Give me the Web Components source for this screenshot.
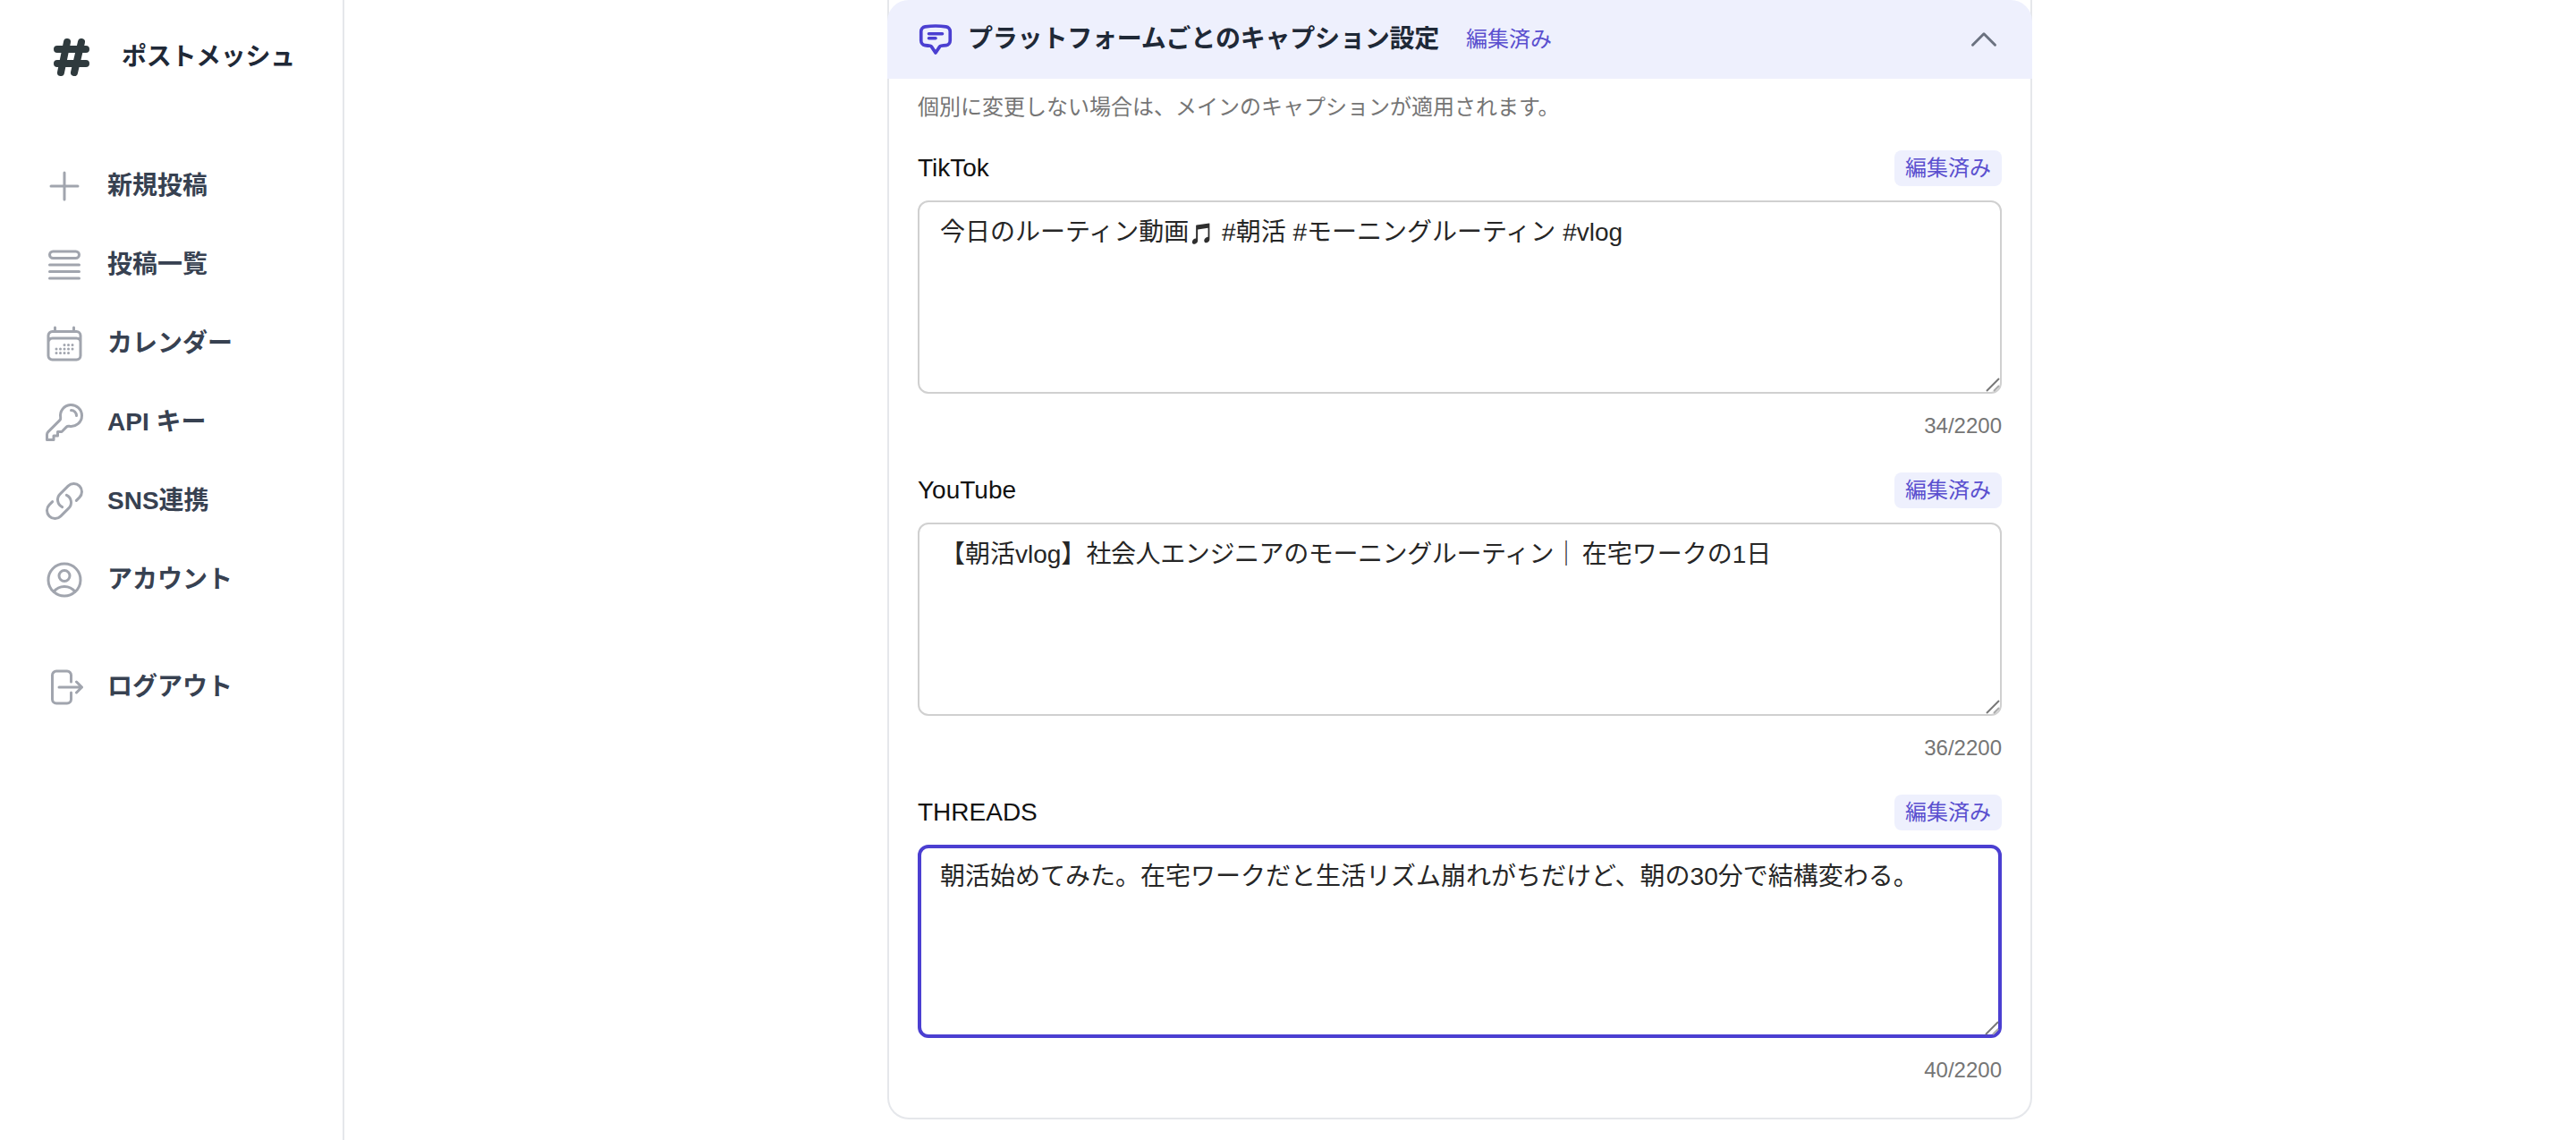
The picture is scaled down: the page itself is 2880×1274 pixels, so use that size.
<!doctype html>
<html lang="ja"><head><meta charset="utf-8">
<style>
html,body{margin:0;height:100%;background:#fff;overflow:hidden}
body{font-family:"Liberation Sans","Noto Sans CJK JP",sans-serif}
</style></head><body>
<pm-app>
  <pm-sidebar slot="side"></pm-sidebar>
  <pm-card slot="main" title="プラットフォームごとのキャプション設定" note="個別に変更しない場合は、メインのキャプションが適用されます。">
    <pm-field label="TikTok" count="34/2200">今日のルーティン動画<span style="font-size:23px;filter:grayscale(1) brightness(.45)">🎵</span> #朝活 #モーニングルーティン #vlog</pm-field>
    <pm-field label="YouTube" count="36/2200">【朝活vlog】<span style="letter-spacing:-.4px">社会人エンジニアのモーニングルーティン</span><span style="letter-spacing:3.5px">｜</span>在宅ワークの1日</pm-field>
    <pm-field label="THREADS" count="40/2200" focused>朝活始めてみた。在宅ワークだと生活リズム崩れがちだけど、朝の30分で結構変わる。</pm-field>
  </pm-card>
</pm-app>
<script>
const FONT='"Liberation Sans","Noto Sans CJK JP",sans-serif';
class PmApp extends HTMLElement{connectedCallback(){if(this.shadowRoot)return;this.attachShadow({mode:'open'}).innerHTML=`<style>
:host{display:grid;grid-template-columns:385px 1fr;height:1274px;width:2880px;overflow:hidden}
main{display:flex;justify-content:center;overflow:hidden;margin-left:-1px}
</style><slot name="side"></slot><main><slot name="main"></slot></main>`}}
const ICONS={
plus:'M12 4.5v15m7.5-7.5h-15',
list:'M3.75 12h16.5m-16.5 3.75h16.5M3.75 19.5h16.5M5.625 4.5h12.75a1.875 1.875 0 0 1 0 3.75H5.625a1.875 1.875 0 0 1 0-3.75Z',
cal:'M6.75 3v2.25M17.25 3v2.25M3 18.75V7.5a2.25 2.25 0 0 1 2.25-2.25h13.5A2.25 2.25 0 0 1 21 7.5v11.25m-18 0A2.25 2.25 0 0 0 5.25 21h13.5A2.25 2.25 0 0 0 21 18.75m-18 0v-7.5A2.25 2.25 0 0 1 5.25 9h13.5A2.25 2.25 0 0 1 21 11.25v7.5m-9-6h.008v.008H12v-.008ZM12 15h.008v.008H12V15Zm0 2.25h.008v.008H12v-.008ZM9.75 15h.008v.008H9.75V15Zm0 2.25h.008v.008H9.75v-.008ZM7.5 15h.008v.008H7.5V15Zm0 2.25h.008v.008H7.5v-.008Zm6.75-4.5h.008v.008h-.008v-.008Zm0 2.25h.008v.008h-.008V15Zm0 2.25h.008v.008h-.008v-.008Zm2.25-4.5h.008v.008H16.5v-.008Zm0 2.25h.008v.008H16.5V15Z',
key:'M15.75 5.25a3 3 0 0 1 3 3m3 0a6 6 0 0 1-7.029 5.912c-.563-.097-1.159.026-1.563.43L10.5 17.25H8.25v2.25H6v2.25H2.25v-2.818c0-.597.237-1.17.659-1.591l6.499-6.499c.404-.404.527-1 .43-1.563A6 6 0 1 1 21.75 8.25Z',
link:'M13.19 8.688a4.5 4.5 0 0 1 1.242 7.244l-4.5 4.5a4.5 4.5 0 0 1-6.364-6.364l1.757-1.757m13.35-.622 1.757-1.757a4.5 4.5 0 0 0-6.364-6.364l-4.5 4.5a4.5 4.5 0 0 0 1.242 7.244',
user:'M17.982 18.725A7.488 7.488 0 0 0 12 15.75a7.488 7.488 0 0 0-5.982 2.975m11.963 0a9 9 0 1 0-11.963 0m11.963 0A8.966 8.966 0 0 1 12 21a8.966 8.966 0 0 1-5.982-2.275M15 9.75a3 3 0 1 1-6 0 3 3 0 0 1 6 0Z',
out:'M15.75 9V5.25A2.25 2.25 0 0 0 13.5 3h-6a2.25 2.25 0 0 0-2.25 2.25v13.5A2.25 2.25 0 0 0 7.5 21h6a2.25 2.25 0 0 0 2.25-2.25V15m3 0 3-3m0 0-3-3m3 3H9'};
class PmNav extends HTMLElement{connectedCallback(){if(this.shadowRoot)return;this.attachShadow({mode:'open'}).innerHTML=`<style>
:host{display:flex;align-items:center;gap:24px;height:88px;padding-left:48px;font:600 28px/40px ${FONT};color:#374151}
svg{width:48px;height:48px;fill:none;stroke:#a1a5ae;stroke-width:1.5;stroke-linecap:round;stroke-linejoin:round;flex:none}
</style><svg viewBox="0 0 24 24"><path d="${ICONS[this.getAttribute('icon')]}"/></svg><slot></slot>`}}
class PmSidebar extends HTMLElement{connectedCallback(){if(this.shadowRoot)return;this.attachShadow({mode:'open'}).innerHTML=`<style>
:host{display:flex;flex-direction:column;height:1274px;box-sizing:border-box;border-right:2px solid #e5e7eb;background:#fff}
.logo{display:flex;align-items:center;gap:32px;height:62px;padding:32px 0 0 56px;margin-bottom:70px;font:700 28px/40px ${FONT};color:#1f2937}
.logo svg{width:48px;height:48px;flex:none}
.logo span{letter-spacing:-.3px;position:relative;top:1px}
nav{display:flex;flex-direction:column}
.sep{height:32px}
</style>
<div class="logo"><svg viewBox="0 0 48 48" fill="none" stroke="#2f3a3d" stroke-width="8" stroke-linecap="round"><path d="M19 8 12 42M35 8 27 42M8 16h32M8 32h32"/></svg><span>ポストメッシュ</span></div>
<nav>
<pm-nav icon="plus">新規投稿</pm-nav><pm-nav icon="list">投稿一覧</pm-nav><pm-nav icon="cal">カレンダー</pm-nav><pm-nav icon="key">API キー</pm-nav><pm-nav icon="link">SNS連携</pm-nav><pm-nav icon="user">アカウント</pm-nav>
<div class="sep"></div>
<pm-nav icon="out">ログアウト</pm-nav>
</nav>`}}
class PmBadge extends HTMLElement{connectedCallback(){if(this.shadowRoot)return;this.attachShadow({mode:'open'}).innerHTML=`<style>
:host{display:inline-block;box-sizing:border-box;height:40px;padding:0 12px;border-radius:8px;background:#eef0fd;color:#5a4fcf;font:400 24px/40px ${FONT}}
</style><slot></slot>`}}
class PmField extends HTMLElement{connectedCallback(){if(this.shadowRoot)return;const f=this.hasAttribute('focused');this.attachShadow({mode:'open'}).innerHTML=`<style>
:host{display:block;height:360px}
.top{display:flex;justify-content:space-between;align-items:center;height:40px;margin-bottom:16px;font:400 28px/40px ${FONT};color:#111}
.wrap{position:relative;height:216px}
.ta{box-sizing:border-box;width:100%;height:216px;padding:${f?'14px 21px':'16px 23px'};border:${f?'4px solid #4b3fd1':'2px solid #d0d0d0'};border-radius:12px;background:#fff;font:400 28px/36px ${FONT};color:#262626;outline:none;overflow:hidden;white-space:pre-wrap}
.grip{position:absolute;right:${f?'3':'2'}px;bottom:${f?'3':'2'}px;width:16px;height:16px;pointer-events:none;fill:none;stroke:#777;stroke-width:2}
.count{margin-top:20px;text-align:right;font:400 24px/32px ${FONT};color:#757575}
</style><div class="top"><span>${this.getAttribute('label')}</span><pm-badge>編集済み</pm-badge></div>
<div class="wrap"><div class="ta" role="textbox" aria-multiline="true"><slot></slot></div><svg class="grip" viewBox="0 0 16 16"><path d="M15 1 1 15"/><path d="M15 9 9 15" stroke="#aaa"/></svg></div><div class="count">${this.getAttribute('count')}</div>`}}
class PmCard extends HTMLElement{connectedCallback(){if(this.shadowRoot)return;this.attachShadow({mode:'open'}).innerHTML=`<style>
:host{display:block;box-sizing:border-box;width:1280px;height:1251px;border:2px solid #e5e7eb;border-top:0;border-radius:0 0 24px 24px;background:#fff}
header{display:flex;align-items:center;height:88px;margin:0 -2px;padding:0 34px;background:#eef0fd;border-radius:24px 24px 0 0}
header svg.c{width:40px;height:40px;flex:none;margin-right:16px;fill:none;stroke:#4b3fd1;stroke-width:2.2;stroke-linecap:round;stroke-linejoin:round}
h2{margin:0;font:700 28px/40px ${FONT};color:#1f2937;letter-spacing:-.2px}
.st{margin-left:30px;font:400 24px/32px ${FONT};color:#5a4fcf}
.ch{margin-left:auto;width:40px;height:40px;fill:none;stroke:#6b7280;stroke-width:1.8;stroke-linecap:round;stroke-linejoin:round}
.body{padding:14px 32px 0}
p{margin:0 0 30px;font:400 24px/36px ${FONT};color:#757575}
</style><header><svg class="c" viewBox="0 0 24 24"><path d="M7.5 8.25h9m-9 3H12m-9.75 1.51c0 1.6 1.123 2.994 2.707 3.227 1.129.166 2.27.293 3.423.379.35.026.67.21.865.501L12 21l2.755-4.133a1.14 1.14 0 0 1 .865-.501 48.172 48.172 0 0 0 3.423-.379c1.584-.233 2.707-1.626 2.707-3.228V6.741c0-1.602-1.123-2.995-2.707-3.228A48.394 48.394 0 0 0 12 3c-2.392 0-4.744.175-7.043.513C3.373 3.746 2.25 5.14 2.25 6.741v6.018Z"/></svg><h2>${this.getAttribute('title')}</h2><span class="st">編集済み</span>
<svg class="ch" viewBox="0 0 24 24"><path d="M4.5 15.75 12 8.25l7.5 7.5"/></svg></header>
<div class="body"><p>${this.getAttribute('note')}</p><slot></slot></div>`}}
customElements.define('pm-badge',PmBadge);customElements.define('pm-field',PmField);customElements.define('pm-card',PmCard);customElements.define('pm-nav',PmNav);customElements.define('pm-sidebar',PmSidebar);customElements.define('pm-app',PmApp);
</script></body></html>
